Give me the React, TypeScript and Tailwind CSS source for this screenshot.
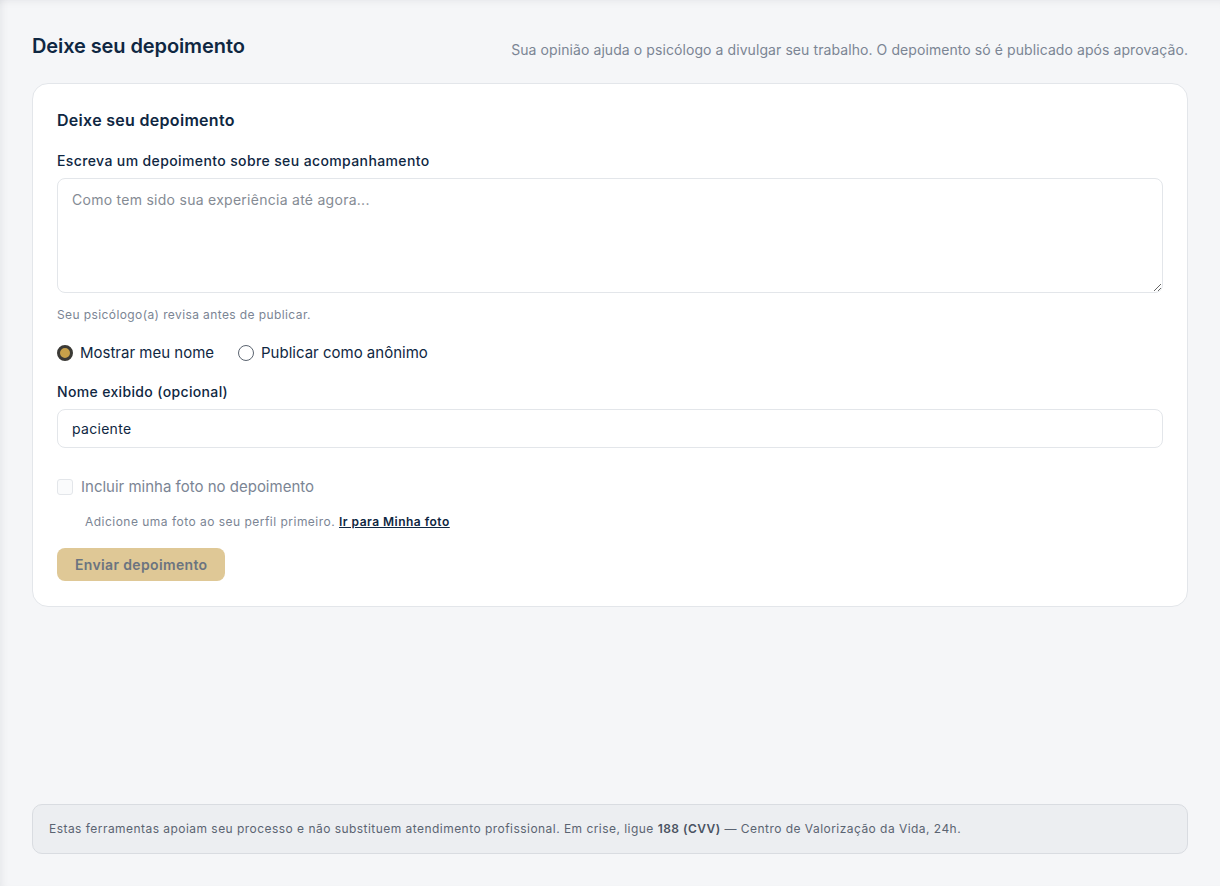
import { useState } from 'react'

const navy = 'text-[#0f2742]'

export default function App() {
  const [mode, setMode] = useState<'name' | 'anon'>('name')
  const [text, setText] = useState('')
  const [name, setName] = useState('paciente')

  return (
    <div className="min-h-screen flex flex-col bg-[#f5f6f8] px-8 pt-8 pb-8 font-['Inter',sans-serif] shadow-[inset_7px_0_8px_-6px_rgba(15,23,42,0.08),inset_0_8px_10px_-8px_rgba(15,23,42,0.08)]">
      {/* Header */}
      <div className="flex items-end justify-between mb-[23px]">
        <h1 className={`text-xl font-semibold leading-7 tracking-[-0.1px] ${navy}`}>Deixe seu depoimento</h1>
        <p className="text-sm text-[#7b8594] leading-5 tracking-[0.08px]">
          Sua opinião ajuda o psicólogo a divulgar seu trabalho. O depoimento só é publicado após aprovação.
        </p>
      </div>

      {/* Card */}
      <div className="bg-white rounded-2xl border border-[#e3e6ea] px-6 pt-6 pb-[25px]">
        <h2 className={`text-base font-semibold leading-6 tracking-[0.3px] ${navy}`}>Deixe seu depoimento</h2>

        <label className={`block mt-[19px] mb-[7px] text-sm font-medium leading-5 tracking-[0.38px] ${navy}`}>
          Escreva um depoimento sobre seu acompanhamento
        </label>
        <textarea
          value={text}
          onChange={(e) => setText(e.target.value)}
          placeholder="Como tem sido sua experiência até agora..."
          className="block w-full h-[115px] rounded-lg border border-[#e3e6ea] px-[14px] py-[11px] text-sm leading-5 tracking-[0.27px] text-[#0f2742] placeholder:text-[#858b94] outline-none"
        />
        <p className="mt-[14px] text-xs leading-4 tracking-[0.4px] text-[#7b8594]">Seu psicólogo(a) revisa antes de publicar.</p>

        <div className="flex items-center gap-6 mt-5">
          <button onClick={() => setMode('name')} className="flex items-center gap-[7px]">
            <span
              className={`w-4 h-4 rounded-full border ${
                mode === 'name' ? 'border-[3px] border-[#3b3a36] bg-[#c9a24a]' : 'border-[#5b6470] bg-white'
              }`}
            />
            <span className={`text-[15px] leading-5 ${navy}`}>Mostrar meu nome</span>
          </button>
          <button onClick={() => setMode('anon')} className="flex items-center gap-[7px]">
            <span
              className={`w-4 h-4 rounded-full border ${
                mode === 'anon' ? 'border-[3px] border-[#3b3a36] bg-[#c9a24a]' : 'border-[#5b6470] bg-white'
              }`}
            />
            <span className={`text-[15px] leading-5 ${navy}`}>Publicar como anônimo</span>
          </button>
        </div>

        <label className={`block mt-[19px] mb-[7px] text-sm font-medium leading-5 tracking-[0.35px] ${navy}`}>
          Nome exibido (opcional)
        </label>
        <input
          value={name}
          onChange={(e) => setName(e.target.value)}
          className="block w-full h-[39px] rounded-lg border border-[#e3e6ea] px-[14px] text-sm tracking-[0.3px] text-[#0f2742] outline-none"
        />

        <div className="flex items-center gap-2 mt-[29px]">
          <span className="w-4 h-4 rounded-[3px] border border-[#e3e6ea] bg-[#fafbfc]" />
          <span className="text-[15px] leading-5 text-[#7b8594]">Incluir minha foto no depoimento</span>
        </div>
        <p className="mt-[17px] pl-7 text-xs leading-4 tracking-[0.48px] text-[#7b8594]">
          Adicione uma foto ao seu perfil primeiro.{' '}
          <a href="#" className={`font-semibold underline ${navy}`}>
            Ir para Minha foto
          </a>
        </p>

        <button
          disabled
          className="mt-[18px] h-[33px] px-[18px] rounded-lg bg-[#dfc896] text-sm font-semibold tracking-[0.35px] text-[#6b7480]"
        >
          Enviar depoimento
        </button>
      </div>

      {/* Footer note */}
      <div className="mt-auto rounded-[10px] border border-[#d9dce1] bg-[#eceef1] px-4 py-4 text-xs leading-4 tracking-[0.46px] text-[#5b6472]">
        Estas ferramentas apoiam seu processo e não substituem atendimento profissional. Em crise, ligue{' '}
        <strong className="font-semibold text-[#4a5362]">188 (CVV)</strong> — Centro de Valorização da Vida, 24h.
      </div>
    </div>
  )
}
